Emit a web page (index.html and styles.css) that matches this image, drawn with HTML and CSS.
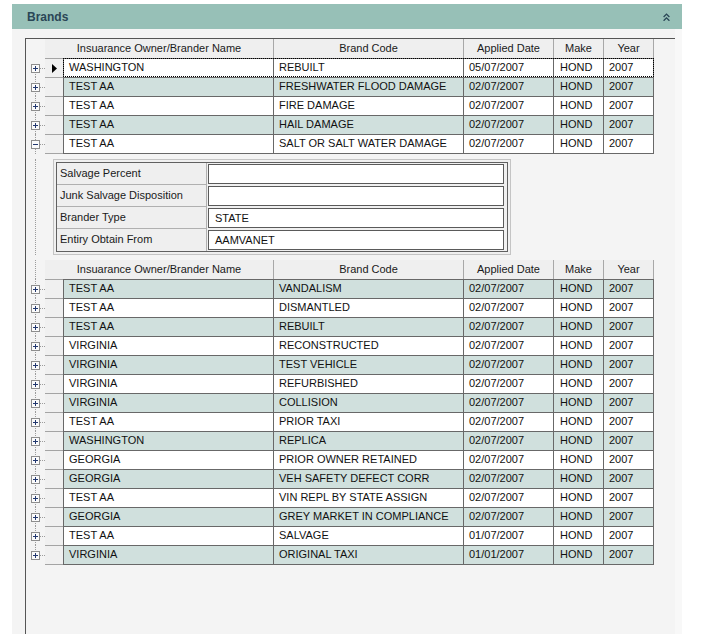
FILE: index.html
```html
<!DOCTYPE html>
<html>
<head>
<meta charset="utf-8">
<link rel="stylesheet" href="styles.css">
</head>
<body>
<svg class="defs" width="0" height="0">
  <symbol id="plus" viewBox="0 0 9 9"><rect x="0.5" y="0.5" width="8" height="8" fill="#fbfbfb" stroke="#8e8e8e"/><path d="M2 4.5h5M4.5 2v5" stroke="#22386f" fill="none"/></symbol>
  <symbol id="minus" viewBox="0 0 9 9"><rect x="0.5" y="0.5" width="8" height="8" fill="#fbfbfb" stroke="#8e8e8e"/><path d="M2 4.5h5" stroke="#22386f" fill="none"/></symbol>
</svg>
<div class="panel">
  <div class="titlebar">
    <span class="title">Brands</span>
    <svg class="chev" viewBox="0 0 7 8"><polyline points="0.6,4 3.5,1.1 6.4,4" fill="none" stroke="#2a4656" stroke-width="1.3"/><polyline points="0.6,7.8 3.5,4.9 6.4,7.8" fill="none" stroke="#2a4656" stroke-width="1.3"/></svg>
  </div>
  <div class="panel-body">
    <div class="grid-area">
      <div class="hrow">
        <div class="tree"></div>
        <div class="hc h-name">Insuarance Owner/Brander Name</div>
        <div class="hc c-code">Brand Code</div>
        <div class="hc c-date">Applied Date</div>
        <div class="hc c-make">Make</div>
        <div class="hc c-year">Year</div>
      </div>
      <div class="row">
        <div class="tree ln first"><span class="h"></span><svg class="xp"><use href="#plus"/></svg></div>
        <div class="rh"><svg class="arrow" viewBox="0 0 5 9"><polygon points="0,0 5,4.5 0,9" fill="#000"/></svg></div>
        <div class="cells focus">
          <div class="cell c-name">WASHINGTON</div><div class="cell c-code">REBUILT</div><div class="cell c-date">05/07/2007</div><div class="cell c-make">HOND</div><div class="cell c-year">2007</div>
        </div>
      </div>
      <div class="row">
        <div class="tree ln"><span class="h"></span><svg class="xp"><use href="#plus"/></svg></div>
        <div class="rh"></div>
        <div class="cells alt">
          <div class="cell c-name">TEST AA</div><div class="cell c-code">FRESHWATER FLOOD DAMAGE</div><div class="cell c-date">02/07/2007</div><div class="cell c-make">HOND</div><div class="cell c-year">2007</div>
        </div>
      </div>
      <div class="row">
        <div class="tree ln"><span class="h"></span><svg class="xp"><use href="#plus"/></svg></div>
        <div class="rh"></div>
        <div class="cells">
          <div class="cell c-name">TEST AA</div><div class="cell c-code">FIRE DAMAGE</div><div class="cell c-date">02/07/2007</div><div class="cell c-make">HOND</div><div class="cell c-year">2007</div>
        </div>
      </div>
      <div class="row">
        <div class="tree ln"><span class="h"></span><svg class="xp"><use href="#plus"/></svg></div>
        <div class="rh"></div>
        <div class="cells alt">
          <div class="cell c-name">TEST AA</div><div class="cell c-code">HAIL DAMAGE</div><div class="cell c-date">02/07/2007</div><div class="cell c-make">HOND</div><div class="cell c-year">2007</div>
        </div>
      </div>
      <div class="row lastrow">
        <div class="tree ln"><span class="h"></span><svg class="xp"><use href="#minus"/></svg></div>
        <div class="rh"></div>
        <div class="cells">
          <div class="cell c-name">TEST AA</div><div class="cell c-code">SALT OR SALT WATER DAMAGE</div><div class="cell c-date">02/07/2007</div><div class="cell c-make">HOND</div><div class="cell c-year">2007</div>
        </div>
      </div>

      <div class="detail-wrap">
        <div class="tree ln"></div>
        <div class="detail">
          <div class="detail-inner">
            <div class="drow"><div class="dlabel">Salvage Percent</div><div class="dval"><div class="tbox"></div></div></div>
            <div class="drow"><div class="dlabel">Junk Salvage Disposition</div><div class="dval"><div class="tbox"></div></div></div>
            <div class="drow"><div class="dlabel">Brander Type</div><div class="dval"><div class="tbox">STATE</div></div></div>
            <div class="drow"><div class="dlabel">Entiry Obtain From</div><div class="dval"><div class="tbox">AAMVANET</div></div></div>
          </div>
        </div>
      </div>

      <div class="hrow">
        <div class="tree ln"></div>
        <div class="hc h-name">Insuarance Owner/Brander Name</div>
        <div class="hc c-code">Brand Code</div>
        <div class="hc c-date">Applied Date</div>
        <div class="hc c-make">Make</div>
        <div class="hc c-year">Year</div>
      </div>
      <div class="row">
        <div class="tree ln"><span class="h"></span><svg class="xp"><use href="#plus"/></svg></div>
        <div class="rh"></div>
        <div class="cells alt"><div class="cell c-name">TEST AA</div><div class="cell c-code">VANDALISM</div><div class="cell c-date">02/07/2007</div><div class="cell c-make">HOND</div><div class="cell c-year">2007</div></div>
      </div>
      <div class="row">
        <div class="tree ln"><span class="h"></span><svg class="xp"><use href="#plus"/></svg></div>
        <div class="rh"></div>
        <div class="cells"><div class="cell c-name">TEST AA</div><div class="cell c-code">DISMANTLED</div><div class="cell c-date">02/07/2007</div><div class="cell c-make">HOND</div><div class="cell c-year">2007</div></div>
      </div>
      <div class="row">
        <div class="tree ln"><span class="h"></span><svg class="xp"><use href="#plus"/></svg></div>
        <div class="rh"></div>
        <div class="cells alt"><div class="cell c-name">TEST AA</div><div class="cell c-code">REBUILT</div><div class="cell c-date">02/07/2007</div><div class="cell c-make">HOND</div><div class="cell c-year">2007</div></div>
      </div>
      <div class="row">
        <div class="tree ln"><span class="h"></span><svg class="xp"><use href="#plus"/></svg></div>
        <div class="rh"></div>
        <div class="cells"><div class="cell c-name">VIRGINIA</div><div class="cell c-code">RECONSTRUCTED</div><div class="cell c-date">02/07/2007</div><div class="cell c-make">HOND</div><div class="cell c-year">2007</div></div>
      </div>
      <div class="row">
        <div class="tree ln"><span class="h"></span><svg class="xp"><use href="#plus"/></svg></div>
        <div class="rh"></div>
        <div class="cells alt"><div class="cell c-name">VIRGINIA</div><div class="cell c-code">TEST VEHICLE</div><div class="cell c-date">02/07/2007</div><div class="cell c-make">HOND</div><div class="cell c-year">2007</div></div>
      </div>
      <div class="row">
        <div class="tree ln"><span class="h"></span><svg class="xp"><use href="#plus"/></svg></div>
        <div class="rh"></div>
        <div class="cells"><div class="cell c-name">VIRGINIA</div><div class="cell c-code">REFURBISHED</div><div class="cell c-date">02/07/2007</div><div class="cell c-make">HOND</div><div class="cell c-year">2007</div></div>
      </div>
      <div class="row">
        <div class="tree ln"><span class="h"></span><svg class="xp"><use href="#plus"/></svg></div>
        <div class="rh"></div>
        <div class="cells alt"><div class="cell c-name">VIRGINIA</div><div class="cell c-code">COLLISION</div><div class="cell c-date">02/07/2007</div><div class="cell c-make">HOND</div><div class="cell c-year">2007</div></div>
      </div>
      <div class="row">
        <div class="tree ln"><span class="h"></span><svg class="xp"><use href="#plus"/></svg></div>
        <div class="rh"></div>
        <div class="cells"><div class="cell c-name">TEST AA</div><div class="cell c-code">PRIOR TAXI</div><div class="cell c-date">02/07/2007</div><div class="cell c-make">HOND</div><div class="cell c-year">2007</div></div>
      </div>
      <div class="row">
        <div class="tree ln"><span class="h"></span><svg class="xp"><use href="#plus"/></svg></div>
        <div class="rh"></div>
        <div class="cells alt"><div class="cell c-name">WASHINGTON</div><div class="cell c-code">REPLICA</div><div class="cell c-date">02/07/2007</div><div class="cell c-make">HOND</div><div class="cell c-year">2007</div></div>
      </div>
      <div class="row">
        <div class="tree ln"><span class="h"></span><svg class="xp"><use href="#plus"/></svg></div>
        <div class="rh"></div>
        <div class="cells"><div class="cell c-name">GEORGIA</div><div class="cell c-code">PRIOR OWNER RETAINED</div><div class="cell c-date">02/07/2007</div><div class="cell c-make">HOND</div><div class="cell c-year">2007</div></div>
      </div>
      <div class="row">
        <div class="tree ln"><span class="h"></span><svg class="xp"><use href="#plus"/></svg></div>
        <div class="rh"></div>
        <div class="cells alt"><div class="cell c-name">GEORGIA</div><div class="cell c-code">VEH SAFETY DEFECT CORR</div><div class="cell c-date">02/07/2007</div><div class="cell c-make">HOND</div><div class="cell c-year">2007</div></div>
      </div>
      <div class="row">
        <div class="tree ln"><span class="h"></span><svg class="xp"><use href="#plus"/></svg></div>
        <div class="rh"></div>
        <div class="cells"><div class="cell c-name">TEST AA</div><div class="cell c-code">VIN REPL BY STATE ASSIGN</div><div class="cell c-date">02/07/2007</div><div class="cell c-make">HOND</div><div class="cell c-year">2007</div></div>
      </div>
      <div class="row">
        <div class="tree ln"><span class="h"></span><svg class="xp"><use href="#plus"/></svg></div>
        <div class="rh"></div>
        <div class="cells alt"><div class="cell c-name">GEORGIA</div><div class="cell c-code">GREY MARKET IN COMPLIANCE</div><div class="cell c-date">02/07/2007</div><div class="cell c-make">HOND</div><div class="cell c-year">2007</div></div>
      </div>
      <div class="row">
        <div class="tree ln"><span class="h"></span><svg class="xp"><use href="#plus"/></svg></div>
        <div class="rh"></div>
        <div class="cells"><div class="cell c-name">TEST AA</div><div class="cell c-code">SALVAGE</div><div class="cell c-date">01/07/2007</div><div class="cell c-make">HOND</div><div class="cell c-year">2007</div></div>
      </div>
      <div class="row lastrow">
        <div class="tree ln last"><span class="h"></span><svg class="xp"><use href="#plus"/></svg></div>
        <div class="rh"></div>
        <div class="cells alt"><div class="cell c-name">VIRGINIA</div><div class="cell c-code">ORIGINAL TAXI</div><div class="cell c-date">01/01/2007</div><div class="cell c-make">HOND</div><div class="cell c-year">2007</div></div>
      </div>
    </div>
  </div>
</div>
</body>
</html>
```

FILE: styles.css
```css
* { box-sizing: border-box; margin: 0; padding: 0; }
html, body { width: 706px; height: 634px; overflow: hidden; background: #fff; }
body { font-family: "Liberation Sans", Arial, sans-serif; font-size: 11px; color: #111; }
.defs { position: absolute; width: 0; height: 0; }

.panel { margin-left: 12px; width: 670px; padding-top: 4px; }
.titlebar {
  height: 25px; background: #97c0b7;
  display: flex; align-items: center; justify-content: space-between;
  padding: 0 12px 0 15px;
}
.title { font-weight: bold; font-size: 12px; color: #2a4656; }
.chev { width: 7px; height: 8px; display: block; }

.panel-body {
  height: 605px; background: #f4f4f4;
  padding: 9px 0 0 13px;
  border-right: 7px solid #f8f8f8;
}
.grid-area {
  height: 100%;
  border-left: 1px solid #555;
  border-top: 1px solid #555;
}

.hrow, .row { display: flex; height: 19px; }
.row.lastrow { height: 20px; }

.tree { width: 19px; flex: none; position: relative; }
.tree.ln::before {
  content: ""; position: absolute; left: 9px; top: 0; bottom: 0;
  border-left: 1px dotted #9c9c9c;
}
.tree.first::before { top: 10px; }
.tree.last::before { bottom: 11px; }
.tree .h {
  position: absolute; left: 14px; top: 10px; width: 5px;
  border-top: 1px dotted #9c9c9c;
}
.xp { position: absolute; left: 5px; top: 6px; width: 9px; height: 9px; }

.hc {
  height: 19px; line-height: 19px; background: #efefef;
  text-align: center; color: #1a1a1a;
  border-left: 1px solid #a8a8a8;
}
.hc.h-name { width: 228px; border-left: none; }
.c-name { width: 210px; }
.c-code { width: 190px; }
.c-date { width: 90px; }
.c-make { width: 50px; }
.c-year { width: 51px; border-right: 1px solid #a8a8a8; }

.rh {
  width: 18px; flex: none; background: #f0f0f0;
  border-top: 1px solid #a4a4a4;
  display: flex; align-items: center; padding-left: 7px;
}
.lastrow .rh { border-bottom: 1px solid #a4a4a4; }
.arrow { width: 5px; height: 9px; display: block; }

.cells { display: flex; background: #fff; }
.cells.alt { background: #d0e0dd; }
.cell {
  border-left: 1px solid #686868; border-top: 1px solid #686868;
  line-height: 17px; padding-left: 5px; white-space: nowrap; overflow: hidden;
}
.cell.c-year { border-right: 1px solid #686868; }
.lastrow .cell { border-bottom: 1px solid #686868; }
.cells.focus { outline: 1px dotted #000; outline-offset: -1px; }
.cells .c-make { padding-left: 6px; }

.detail-wrap { display: flex; padding: 5px 0; }
.detail {
  margin-left: 8px; width: 458px;
  border: 1px solid #c4c4c4; padding: 2px; background: #f0f0f0;
}
.detail-inner { border: 1px solid #606060; }
.drow { display: flex; height: 22px; }
.dlabel {
  width: 150px; padding-left: 3px; line-height: 21px;
  border-right: 1px solid #b0b0b0; border-bottom: 1px solid #b0b0b0;
  color: #1a1a1a; background: #efefef;
}
.drow:last-child .dlabel { border-bottom: none; }
.dval { flex: 1; padding: 1px 0 0 1px; }
.tbox {
  width: 296px; height: 20px; background: #fff;
  border: 1px solid #5a5a5a; padding-left: 6px; line-height: 18px; color: #111;
}
```
